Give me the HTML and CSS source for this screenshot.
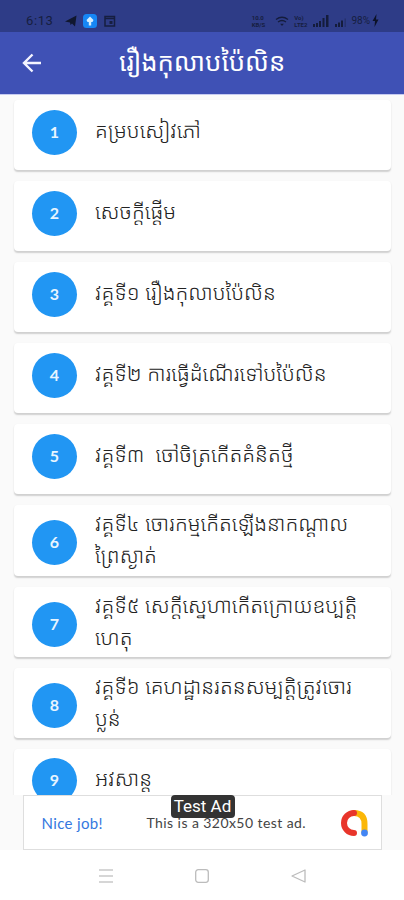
FILE: index.html
```
<!DOCTYPE html>
<html lang="km">

<head>
  <meta charset="UTF-8" />
  <meta name="viewport" content="width=device-width, initial-scale=1.0" />
  <title>រឿងកុលាបប៉ៃលិន</title>
  <link rel="stylesheet" href="styles.css">
</head>

<body>
  <div class="statusbar">
    <span class="clock">6:13</span>
    <svg class="tray-left" width="54" height="16" viewBox="0 0 54 16">
      <path d="M0 9.500 11.500 3.500 10 14.500 7 11.500 5.500 13 5 10.500z" fill="#10172f" />
      <rect x="18" y="2" width="14" height="14" rx="3.5" fill="#1687f5" />
      <path d="M25 4.500 28.500 8 27.500 10H26.200V13.500H23.800V10H22.500L21.500 8z" fill="#d3edff" />
      <path d="M40 4.500h9.500v9.500H40zM40 6.500h9.500" fill="none" stroke="#161e40" stroke-width="1.5" />
      <path d="M44.500 9h3v3h-3z" fill="#161e40" />
    </svg>
    <div class="tray-right">
      <span class="rate">10.0<br>KB/S</span>
      <svg width="14" height="12" viewBox="0 0 14 12" fill="none" stroke="#141c3c" stroke-width="1.3">
        <path d="M1 4.500Q7 0 13 4.500M3 7Q7 4 11 7" />
        <path d="M5.200 8.800h3.600L7 11z" fill="#141c3c" stroke="none" />
      </svg>
      <span class="volte">Vo)<br>LTE2</span>
      <svg width="36" height="12" viewBox="0 0 36 12" fill="#141c3c">
        <path d="M0 9h2v3H0zM3 8h2v4H3zM6 6h2v6H6zM9.500 3h2v9h-2zM13 0h2.500v12H13z" />
        <path d="M22 9h2v3h-2zM25 7.500h2v4.500h-2zM28 5.500h2V12h-2z" />
        <path d="M31.500 3.500h1.500V12h-1.500z" opacity=".35" />
      </svg>
      <span class="battery">98%</span>
      <svg width="7" height="13" viewBox="0 0 6 13" fill="#0c1228">
        <path d="M4 0 0 7h2.500L2 13 6 5.500H3.500z" />
      </svg>
    </div>
  </div>

  <header class="appbar">
    <svg class="back" width="20" height="20" viewBox="0 0 20 20" fill="none" stroke="#f3f4ff" stroke-width="2.400">
      <path d="M19 10H2.500M10.500 1.500 2 10l8.500 8.500" />
    </svg>
    <h1>រឿងកុលាបប៉ៃលិន</h1>
  </header>

  <main class="chapters">
    <div class="card">
      <div class="num">1</div>
      <p>គម្របសៀវភៅ</p>
    </div>
    <div class="card">
      <div class="num">2</div>
      <p>សេចក្ដីផ្ដើម</p>
    </div>
    <div class="card">
      <div class="num">3</div>
      <p>វគ្គទី១ រឿងកុលាបប៉ៃលិន</p>
    </div>
    <div class="card">
      <div class="num">4</div>
      <p>វគ្គទី២ ការធ្វើដំណើរទៅបប៉ៃលិន</p>
    </div>
    <div class="card">
      <div class="num">5</div>
      <p>វគ្គទី៣&nbsp; ចៅចិត្រកើតគំនិតថ្មី</p>
    </div>
    <div class="card two-line">
      <div class="num">6</div>
      <p>វគ្គទី៤ ចោរកម្មកើតឡើងនាកណ្ដាល<br>ព្រៃស្ងាត់</p>
    </div>
    <div class="card two-line">
      <div class="num">7</div>
      <p>វគ្គទី៥ សេក្ដីស្នេហាកើតក្រោយឧប្បត្តិ<br>ហេតុ</p>
    </div>
    <div class="card two-line">
      <div class="num">8</div>
      <p>វគ្គទី៦ គេហដ្ឋានរតនសម្បត្តិត្រូវចោរ<br>ប្លន់</p>
    </div>
    <div class="card">
      <div class="num">9</div>
      <p>អវសាន្ត</p>
    </div>
  </main>

  <div class="ad-row">
    <div class="ad">
      <span class="ad-link">Nice job!</span>
      <span class="ad-text">This is a 320x50 test ad.</span>
      <svg class="admob" width="28" height="28" viewBox="0 0 28 28" fill="none" stroke-width="6" stroke-linecap="round">
        <path d="M14 4Q24.500 4 24.500 15V23" stroke="#fbb707" />
        <path d="M14 4A10 10 0 0 0 14 24" stroke="#e8352b" />
        <circle cx="24.500" cy="24" r="3.400" fill="#4285f4" />
      </svg>
      <span class="ad-badge">Test Ad</span>
    </div>
  </div>

  <nav class="navbar">
    <svg width="14" height="14" viewBox="0 0 14 14" stroke="#c9c9c9" stroke-width="1.500">
      <path d="M0 1h14M0 7h14M0 13h14" />
    </svg>
    <svg width="14" height="14" viewBox="0 0 14 14" fill="none" stroke="#bcbcbc" stroke-width="1.300">
      <rect x=".7" y=".7" width="12.600" height="12.600" rx="2.500" />
    </svg>
    <svg width="15" height="14" viewBox="0 0 15 14" fill="none" stroke="#bcbcbc" stroke-width="1.300" stroke-linejoin="round">
      <path d="M14 1v12L1 7z" />
    </svg>
  </nav>
</body>

</html>
```
FILE: styles.css
```
* {
  box-sizing: border-box;
  margin: 0;
  padding: 0;
}

body {
  width: 404px;
  height: 900px;
  display: flex;
  flex-direction: column;
  overflow: hidden;
  background: #fafafa;
  font-family: Lato, "Noto Sans Khmer", "Khmer OS", sans-serif;
}

svg {
  display: block;
  flex: none;
}

.statusbar {
  height: 32px;
  flex: none;
  display: flex;
  align-items: flex-start;
  padding: 12px 25px 0 26px;
  background: #2e3c87;
  color: #161e40;
}

.clock {
  width: 39px;
  font-family: Roboto, sans-serif;
  font-size: 13px;
  line-height: 17px;
  letter-spacing: 0.6px;
}

.tray-right {
  margin-left: auto;
  display: flex;
  align-items: center;
  height: 17px;
  gap: 5px;
}

.rate,
.volte {
  font: bold 6px/7px Roboto, sans-serif;
}

.rate {
  margin-right: 5px;
}

.volte {
  margin-right: 1px;
}

.battery {
  font: 10px/12px Roboto, sans-serif;
  margin: 0 -3px 0 -3px;
}

.appbar {
  height: 63px;
  flex: none;
  display: flex;
  align-items: center;
  padding-left: 22px;
  background: #3f51b5;
  border-bottom: 1px solid #c5caf0;
}

.appbar h1 {
  margin: -5px 0 0 77px;
  color: #fff;
  font-size: 25.7px;
  font-weight: 400;
  line-height: 40px;
  white-space: nowrap;
}

.chapters {
  flex: none;
  height: 700px;
  padding: 5px 13px 0 14px;
  display: flex;
  flex-direction: column;
  gap: 11px;
  overflow: hidden;
}

.card {
  flex: none;
  height: 70.1px;
  display: flex;
  align-items: flex-start;
  padding: 9.5px 0 0 18px;
  background: #fff;
  border-radius: 4px;
  box-shadow: 0 1.5px 1.5px rgba(0, 0, 0, 0.17);
}

.two-line {
  padding-top: 15px;
}

.num {
  flex: none;
  width: 45px;
  height: 45px;
  border-radius: 50%;
  background: #2196f3;
  color: #e8f5ff;
  font-size: 16px;
  font-weight: 700;
  line-height: 44px;
  text-align: center;
}

.card p {
  margin: 4px 0 0 18px;
  color: #222;
  font-size: 20.9px;
  font-weight: 300;
  line-height: 32px;
  white-space: nowrap;
}

.two-line p {
  margin-top: -13px;
}

.ad-row {
  height: 55px;
  flex: none;
  display: flex;
  justify-content: center;
  align-items: flex-start;
}

.ad {
  position: relative;
  width: 359px;
  height: 55px;
  display: flex;
  align-items: center;
  padding: 0 13px 0 18px;
  background: #fff;
  border: 1px solid #dedede;
}

.ad-link {
  width: 105px;
  color: #3478e0;
  font-size: 15px;
  letter-spacing: 0.35px;
}

.ad-text {
  color: #444;
  font-size: 14px;
  letter-spacing: 0.43px;
  white-space: nowrap;
}

.admob {
  margin-left: auto;
}

.ad-badge {
  position: absolute;
  left: 147px;
  top: -1px;
  width: 64px;
  height: 23px;
  border-radius: 4px;
  background: #333;
  color: #fff;
  font: 17px/23px Roboto, sans-serif;
  text-align: center;
  white-space: nowrap;
}

.navbar {
  flex: 1;
  display: flex;
  justify-content: center;
  gap: 82px;
  padding-top: 19px;
  background: #fff;
}
```
